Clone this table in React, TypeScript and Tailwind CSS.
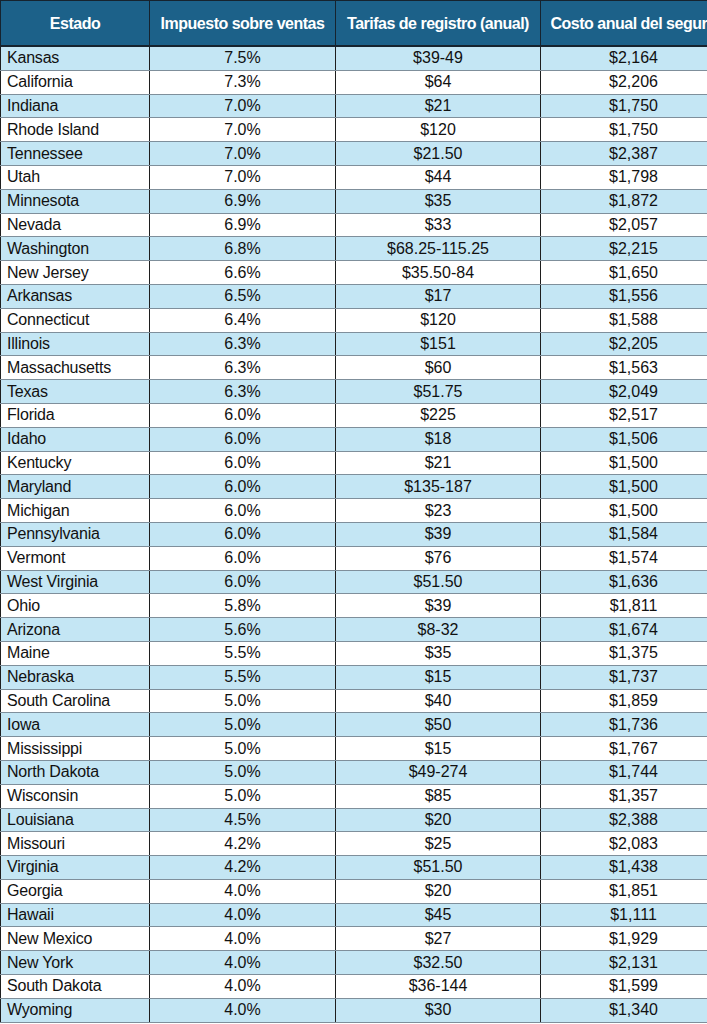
const rows: [string, string, string, string][] = [
  ["Kansas", "7.5%", "$39-49", "$2,164"],
  ["California", "7.3%", "$64", "$2,206"],
  ["Indiana", "7.0%", "$21", "$1,750"],
  ["Rhode Island", "7.0%", "$120", "$1,750"],
  ["Tennessee", "7.0%", "$21.50", "$2,387"],
  ["Utah", "7.0%", "$44", "$1,798"],
  ["Minnesota", "6.9%", "$35", "$1,872"],
  ["Nevada", "6.9%", "$33", "$2,057"],
  ["Washington", "6.8%", "$68.25-115.25", "$2,215"],
  ["New Jersey", "6.6%", "$35.50-84", "$1,650"],
  ["Arkansas", "6.5%", "$17", "$1,556"],
  ["Connecticut", "6.4%", "$120", "$1,588"],
  ["Illinois", "6.3%", "$151", "$2,205"],
  ["Massachusetts", "6.3%", "$60", "$1,563"],
  ["Texas", "6.3%", "$51.75", "$2,049"],
  ["Florida", "6.0%", "$225", "$2,517"],
  ["Idaho", "6.0%", "$18", "$1,506"],
  ["Kentucky", "6.0%", "$21", "$1,500"],
  ["Maryland", "6.0%", "$135-187", "$1,500"],
  ["Michigan", "6.0%", "$23", "$1,500"],
  ["Pennsylvania", "6.0%", "$39", "$1,584"],
  ["Vermont", "6.0%", "$76", "$1,574"],
  ["West Virginia", "6.0%", "$51.50", "$1,636"],
  ["Ohio", "5.8%", "$39", "$1,811"],
  ["Arizona", "5.6%", "$8-32", "$1,674"],
  ["Maine", "5.5%", "$35", "$1,375"],
  ["Nebraska", "5.5%", "$15", "$1,737"],
  ["South Carolina", "5.0%", "$40", "$1,859"],
  ["Iowa", "5.0%", "$50", "$1,736"],
  ["Mississippi", "5.0%", "$15", "$1,767"],
  ["North Dakota", "5.0%", "$49-274", "$1,744"],
  ["Wisconsin", "5.0%", "$85", "$1,357"],
  ["Louisiana", "4.5%", "$20", "$2,388"],
  ["Missouri", "4.2%", "$25", "$2,083"],
  ["Virginia", "4.2%", "$51.50", "$1,438"],
  ["Georgia", "4.0%", "$20", "$1,851"],
  ["Hawaii", "4.0%", "$45", "$1,111"],
  ["New Mexico", "4.0%", "$27", "$1,929"],
  ["New York", "4.0%", "$32.50", "$2,131"],
  ["South Dakota", "4.0%", "$36-144", "$1,599"],
  ["Wyoming", "4.0%", "$30", "$1,340"],
];

const headers = [
  "Estado",
  "Impuesto sobre ventas",
  "Tarifas de registro (anual)",
  "Costo anual del seguro",
];

const cols = "grid grid-cols-[150px_186px_205px_186px]";

export default function App() {
  return (
    <div
      className="w-[707px] h-[1024px] overflow-hidden bg-white"
      style={{ fontFamily: '"Liberation Sans", Arial, sans-serif' }}
    >
      <div className="w-[727px]">
        {/* Header */}
        <div className={`${cols} h-[47px] bg-[#1c6189] border-t border-b-2 border-[#16232e]`}>
          {headers.map((h, i) => (
            <div
              key={h}
              className={`flex items-center justify-center pt-[2px] whitespace-nowrap text-white font-bold text-[16px] tracking-[-0.5px] border-r border-[#16232e] ${
                i === 0 ? "border-l" : ""
              }`}
            >
              {h}
            </div>
          ))}
        </div>

        {/* Rows */}
        {rows.map((r, idx) => (
          <div
            key={r[0]}
            className={`${cols} h-[23.8px] border-b border-[#7f8f9b] text-[16px] leading-none text-[#111] ${
              idx % 2 === 0 ? "bg-[#c4e6f4]" : "bg-white"
            }`}
          >
            <div className="flex items-center pl-[6px] border-l border-r border-[#1e1e1e] whitespace-nowrap tracking-[-0.2px]">
              {r[0]}
            </div>
            <div className="flex items-center justify-center border-r border-[#1e1e1e]">{r[1]}</div>
            <div className="flex items-center justify-center border-r border-[#1e1e1e]">{r[2]}</div>
            <div className="flex items-center justify-center border-r border-[#1e1e1e]">{r[3]}</div>
          </div>
        ))}
      </div>
    </div>
  );
}
